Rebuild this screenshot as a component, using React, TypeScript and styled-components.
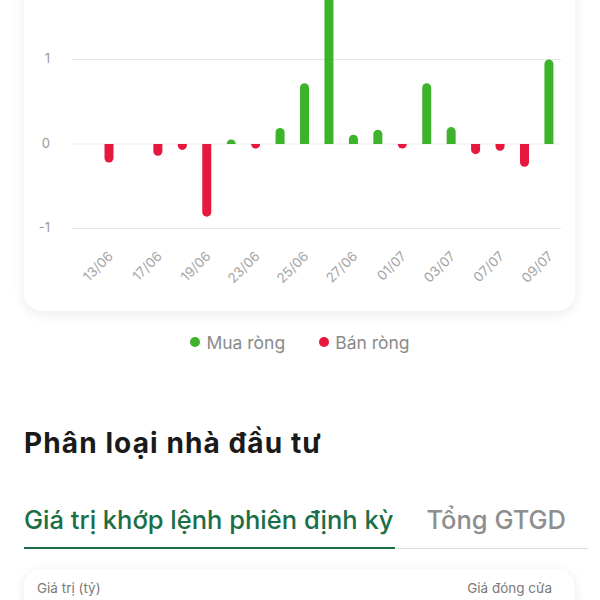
import React from 'react'
import styled, { createGlobalStyle } from 'styled-components'

const GlobalStyle = createGlobalStyle`
  body {
    margin: 0;
    background: #ffffff;
    font-family: Inter, "Noto Sans", "Liberation Sans", sans-serif;
  }
`

const GREEN = '#3db22b'
const RED = '#e8173d'

// net values per session, in billions; null = no bar
const series: { date: string; value: number | null }[] = [
  { date: '13/06', value: -0.22 },
  { date: '14/06', value: null },
  { date: '17/06', value: -0.14 },
  { date: '18/06', value: -0.07 },
  { date: '19/06', value: -0.86 },
  { date: '20/06', value: 0.05 },
  { date: '23/06', value: -0.03 },
  { date: '24/06', value: 0.19 },
  { date: '25/06', value: 0.72 },
  { date: '26/06', value: 1.95 },
  { date: '27/06', value: 0.11 },
  { date: '28/06', value: 0.17 },
  { date: '01/07', value: -0.02 },
  { date: '02/07', value: 0.72 },
  { date: '03/07', value: 0.2 },
  { date: '04/07', value: -0.12 },
  { date: '07/07', value: -0.08 },
  { date: '08/07', value: -0.27 },
  { date: '09/07', value: 1.0 },
]

const CHART_W = 551
const CHART_H = 351
const ZERO_Y = 184
const UNIT = 84.5
const FIRST_X = 85
const STEP = 24.44
const BAR_W = 9
const GRID_X1 = 48
const GRID_X2 = 537

function barPath(cx: number, value: number) {
  const h = Math.abs(value) * UNIT
  const x = cx - BAR_W / 2
  const r = Math.min(BAR_W / 2, h)
  if (value >= 0) {
    const top = ZERO_Y - h
    return `M${x},${ZERO_Y} L${x},${top + r} A${r},${r} 0 0 1 ${x + BAR_W},${top + r} L${x + BAR_W},${ZERO_Y} Z`
  }
  const bottom = ZERO_Y + h
  return `M${x},${ZERO_Y} L${x},${bottom - r} A${r},${r} 0 0 0 ${x + BAR_W},${bottom - r} L${x + BAR_W},${ZERO_Y} Z`
}

function NetChart() {
  return (
    <svg width={CHART_W} height={CHART_H} viewBox={`0 0 ${CHART_W} ${CHART_H}`}>
      {[1, 0, -1].map((v) => (
        <g key={v}>
          <line
            x1={GRID_X1}
            x2={GRID_X2}
            y1={ZERO_Y - v * UNIT}
            y2={ZERO_Y - v * UNIT}
            stroke={v === 0 ? '#ececec' : '#e6e6e6'}
            strokeWidth={1}
          />
          <AxisText x={26} y={ZERO_Y - v * UNIT} textAnchor="end" dominantBaseline="middle">
            {v}
          </AxisText>
        </g>
      ))}
      {series.map((d, i) => {
        const cx = FIRST_X + i * STEP
        return (
          <g key={d.date}>
            {d.value !== null && d.value !== 0 && (
              <path d={barPath(cx, d.value)} fill={d.value > 0 ? GREEN : RED} />
            )}
            {i % 2 === 0 && (
              <DateText
                x={cx + 5}
                y={297}
                textAnchor="end"
                transform={`rotate(-45 ${cx + 5} 297)`}
              >
                {d.date}
              </DateText>
            )}
          </g>
        )
      })}
    </svg>
  )
}

export default function App() {
  return (
    <Page>
      <GlobalStyle />
      <ChartCard>
        <NetChart />
      </ChartCard>
      <Legend>
        <LegendItem>
          <Dot color={GREEN} />
          Mua ròng
        </LegendItem>
        <LegendItem>
          <Dot color={RED} />
          Bán ròng
        </LegendItem>
      </Legend>
      <Heading>Phân loại nhà đầu tư</Heading>
      <Tabs>
        <Tab active>Giá trị khớp lệnh phiên định kỳ</Tab>
        <Tab>Tổng GTGD</Tab>
      </Tabs>
      <TableCard>
        <CardHeader>
          <span>Giá trị (tỷ)</span>
          <span>Giá đóng cửa</span>
        </CardHeader>
      </TableCard>
    </Page>
  )
}

const Page = styled.div`
  width: 600px;
  height: 600px;
  overflow: hidden;
  padding: 0 24px;
  box-sizing: border-box;
`

const ChartCard = styled.div`
  margin-top: -40px;
  width: 551px;
  height: 351px;
  background: #fff;
  border-radius: 18px;
  box-shadow: 0 3px 14px rgba(0, 0, 0, 0.08);
  overflow: hidden;
  svg {
    display: block;
  }
`

const AxisText = styled.text`
  font-size: 13px;
  fill: #9a9a9a;
`

const DateText = styled.text`
  font-size: 13.5px;
  fill: #a6a6a6;
`

const Legend = styled.div`
  display: flex;
  justify-content: center;
  gap: 34px;
  margin-top: 20px;
  height: 22px;
`

const LegendItem = styled.div`
  display: flex;
  align-items: center;
  gap: 6px;
  font-size: 17.5px;
  color: #8a8a8a;
`

const Dot = styled.span<{ color: string }>`
  width: 10px;
  height: 10px;
  border-radius: 50%;
  background: ${(p) => p.color};
`

const Heading = styled.h2`
  margin: 73px 0 0;
  font-size: 28px;
  line-height: 34px;
  font-weight: 700;
  color: #1a1a1a;
  letter-spacing: 1.1px;
`

const Tabs = styled.div`
  display: flex;
  gap: 31px;
  margin-top: 44px;
  width: 564px;
  border-bottom: 1px solid #dcdcdc;
`

const Tab = styled.div<{ active?: boolean }>`
  font-size: 25.5px;
  line-height: 32px;
  font-weight: 500;
  padding: 0 2px 13px 0;
  color: ${(p) => (p.active ? '#1b6e46' : '#8e8e8e')};
  box-shadow: ${(p) => (p.active ? 'inset 0 -2px 0 #1b6e46' : 'none')};
  margin-bottom: -1px;
`

const TableCard = styled.div`
  margin-top: 20px;
  width: 551px;
  height: 80px;
  background: #fff;
  border-radius: 18px;
  box-shadow: 0 2px 12px rgba(0, 0, 0, 0.09);
`

const CardHeader = styled.div`
  display: flex;
  justify-content: space-between;
  padding: 11px 23px 0 13px;
  font-size: 13.5px;
  line-height: 16px;
  color: #7a7a7a;
`
